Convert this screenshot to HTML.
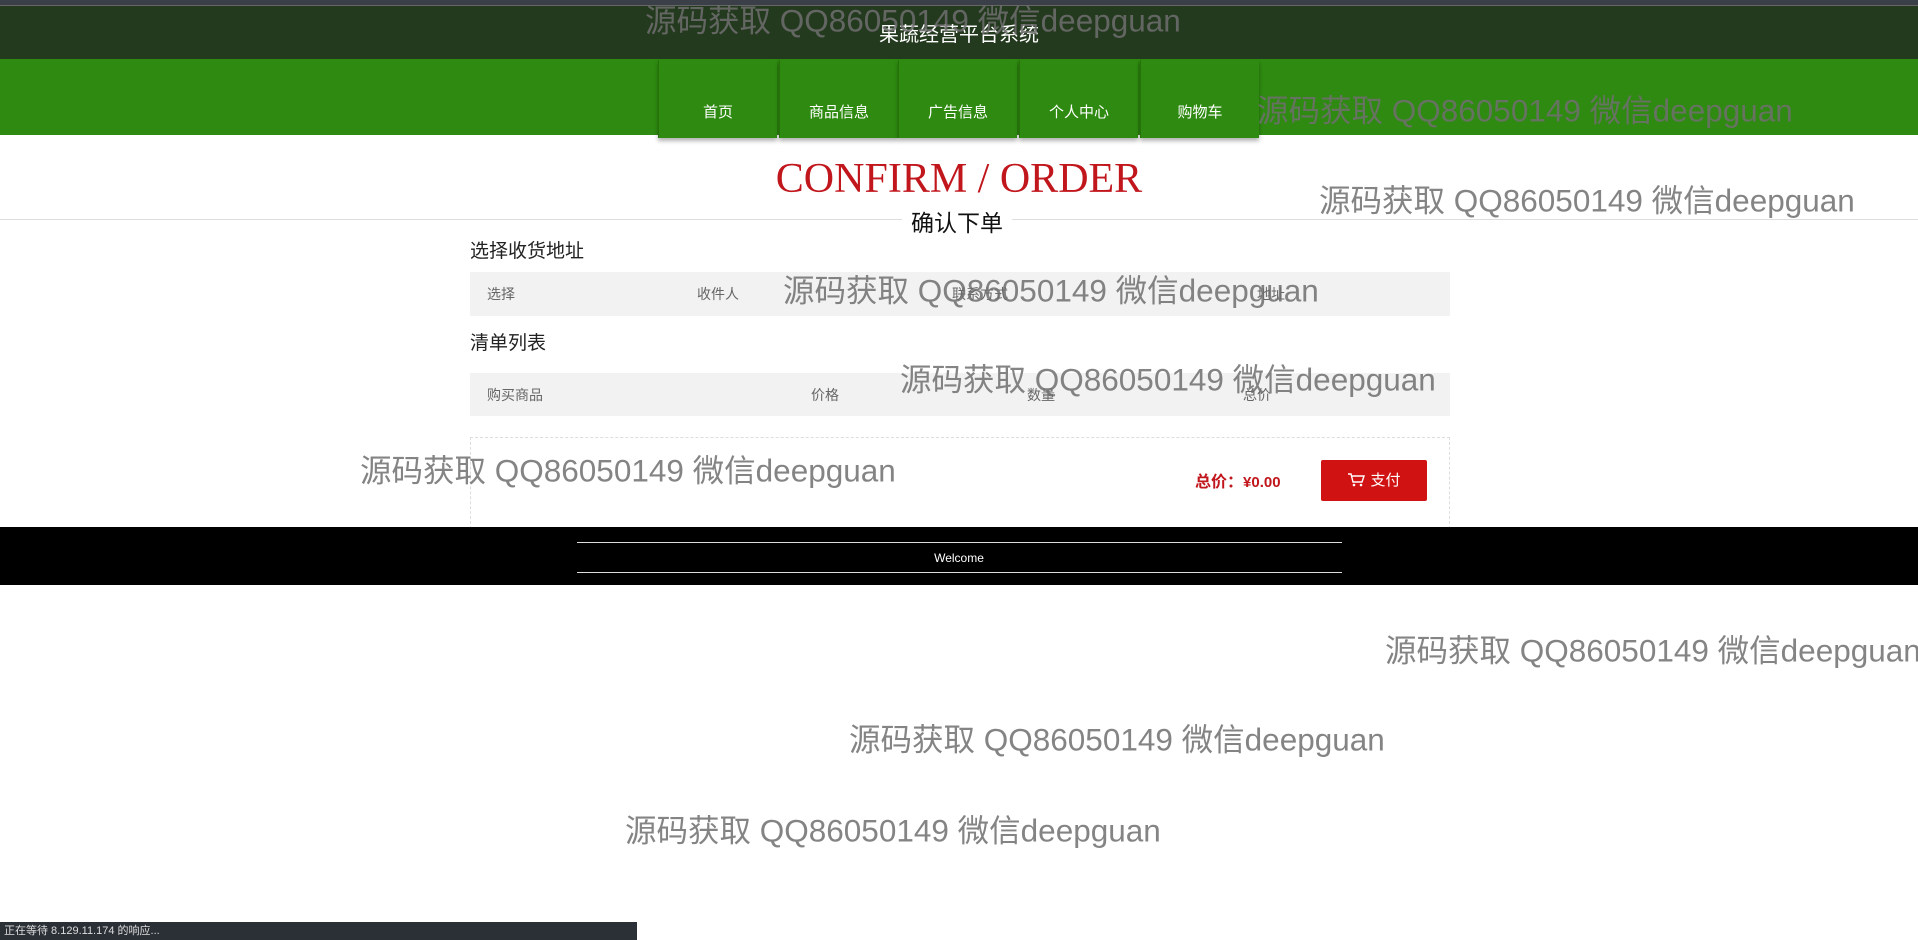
<!DOCTYPE html>
<html><head><meta charset="utf-8"><style>
*{margin:0;padding:0;box-sizing:border-box}
body{width:1918px;height:940px;overflow:hidden;background:#fff;position:relative;font-family:"Liberation Sans","Noto Sans CJK SC",sans-serif}
.a{position:absolute}
.wm{position:absolute;font-size:31.5px;color:rgba(110,110,110,.85);white-space:nowrap;line-height:1;transform:translateY(-50%)}
.nav{position:absolute;top:60px;height:78px;width:119px;background:#2e8a10;box-shadow:0 3px 4px rgba(0,0,0,.3);color:#fff;font-size:15px;text-align:center;padding-top:41px;border-left:1px solid #267208}
.band{position:absolute;left:470px;width:980px;background:#f2f2f2;font-size:14px;color:#666}
.band span{position:absolute;top:50%;transform:translateY(-50%)}
</style></head><body>
<div class="a" style="left:0;top:0;width:1918px;height:5px;background:#3a3f48"></div>
<div class="a" style="left:0;top:5px;width:1918px;height:54px;background:#233a1e;border-top:1px solid #666"></div>
<div class="a" style="left:0;top:18px;width:1918px;text-align:center;color:#fff;font-size:20px">果蔬经营平台系统</div>
<div class="a" style="left:0;top:59px;width:1918px;height:76px;background:#2e8a10"></div>
<div class="nav" style="left:658px">首页</div>
<div class="nav" style="left:779px">商品信息</div>
<div class="nav" style="left:898px">广告信息</div>
<div class="nav" style="left:1019px">个人中心</div>
<div class="nav" style="left:1140px">购物车</div>
<div class="a" style="left:0;top:155px;width:1918px;text-align:center;color:#c0161c;font-family:'Liberation Serif',serif;font-size:42px">CONFIRM / ORDER</div>
<div class="a" style="left:0;top:219px;width:1918px;height:1px;background:#ddd"></div>
<div class="a" style="left:902px;top:204px;width:110px;background:#fff;text-align:center;font-size:23px;color:#111">确认下单</div>
<div class="a" style="left:470px;top:236px;font-size:19px;color:#222">选择收货地址</div>
<div class="band" style="top:272px;height:44px"><span style="left:17px">选择</span><span style="left:227px">收件人</span><span style="left:482px">联系方式</span><span style="left:787px">地址</span></div>
<div class="a" style="left:470px;top:328px;font-size:19px;color:#222">清单列表</div>
<div class="band" style="top:373px;height:43px"><span style="left:17px">购买商品</span><span style="left:341px">价格</span><span style="left:557px">数量</span><span style="left:773px">总价</span></div>
<div class="a" style="left:470px;top:437px;width:980px;height:92px;border:1px dashed #ddd"></div>
<div class="a" style="left:1195px;top:468px;font-size:16px;font-weight:bold;color:#c0161c">总价：<span style="font-size:15px">¥0.00</span></div>
<div class="a" style="left:1321px;top:460px;width:106px;height:41px;background:#d11212;border-radius:2px;color:#fff;font-size:15px;text-align:center;line-height:41px">
<svg width="18" height="16" viewBox="0 0 18 16" style="vertical-align:-3px;margin-right:5px"><path d="M1 2h3l2 8h9l2-6H5" fill="none" stroke="#fff" stroke-width="1.4"/><circle cx="7" cy="13" r="1.3" fill="#fff"/><circle cx="14" cy="13" r="1.3" fill="#fff"/></svg>支付</div>
<div class="a" style="left:0;top:527px;width:1918px;height:58px;background:#000"></div>
<div class="a" style="left:577px;top:542px;width:765px;height:1px;background:#ddd"></div>
<div class="a" style="left:577px;top:572px;width:765px;height:1px;background:#ddd"></div>
<div class="a" style="left:0;top:551px;width:1918px;text-align:center;color:#fff;font-size:12px">Welcome</div>
<div class="a" style="left:0;top:922px;width:637px;height:18px;background:#2b2f36;color:#ddd;font-size:11px;line-height:18px;padding-left:4px">正在等待 8.129.11.174 的响应...</div>
<div class="wm" style="left:645px;top:21px">源码获取 QQ86050149 微信deepguan</div>
<div class="wm" style="left:1257px;top:111px">源码获取 QQ86050149 微信deepguan</div>
<div class="wm" style="left:1319px;top:201px">源码获取 QQ86050149 微信deepguan</div>
<div class="wm" style="left:783px;top:291px">源码获取 QQ86050149 微信deepguan</div>
<div class="wm" style="left:900px;top:380px">源码获取 QQ86050149 微信deepguan</div>
<div class="wm" style="left:360px;top:471px">源码获取 QQ86050149 微信deepguan</div>
<div class="wm" style="left:1385px;top:651px">源码获取 QQ86050149 微信deepguan</div>
<div class="wm" style="left:849px;top:740px">源码获取 QQ86050149 微信deepguan</div>
<div class="wm" style="left:625px;top:831px">源码获取 QQ86050149 微信deepguan</div>
</body></html>
